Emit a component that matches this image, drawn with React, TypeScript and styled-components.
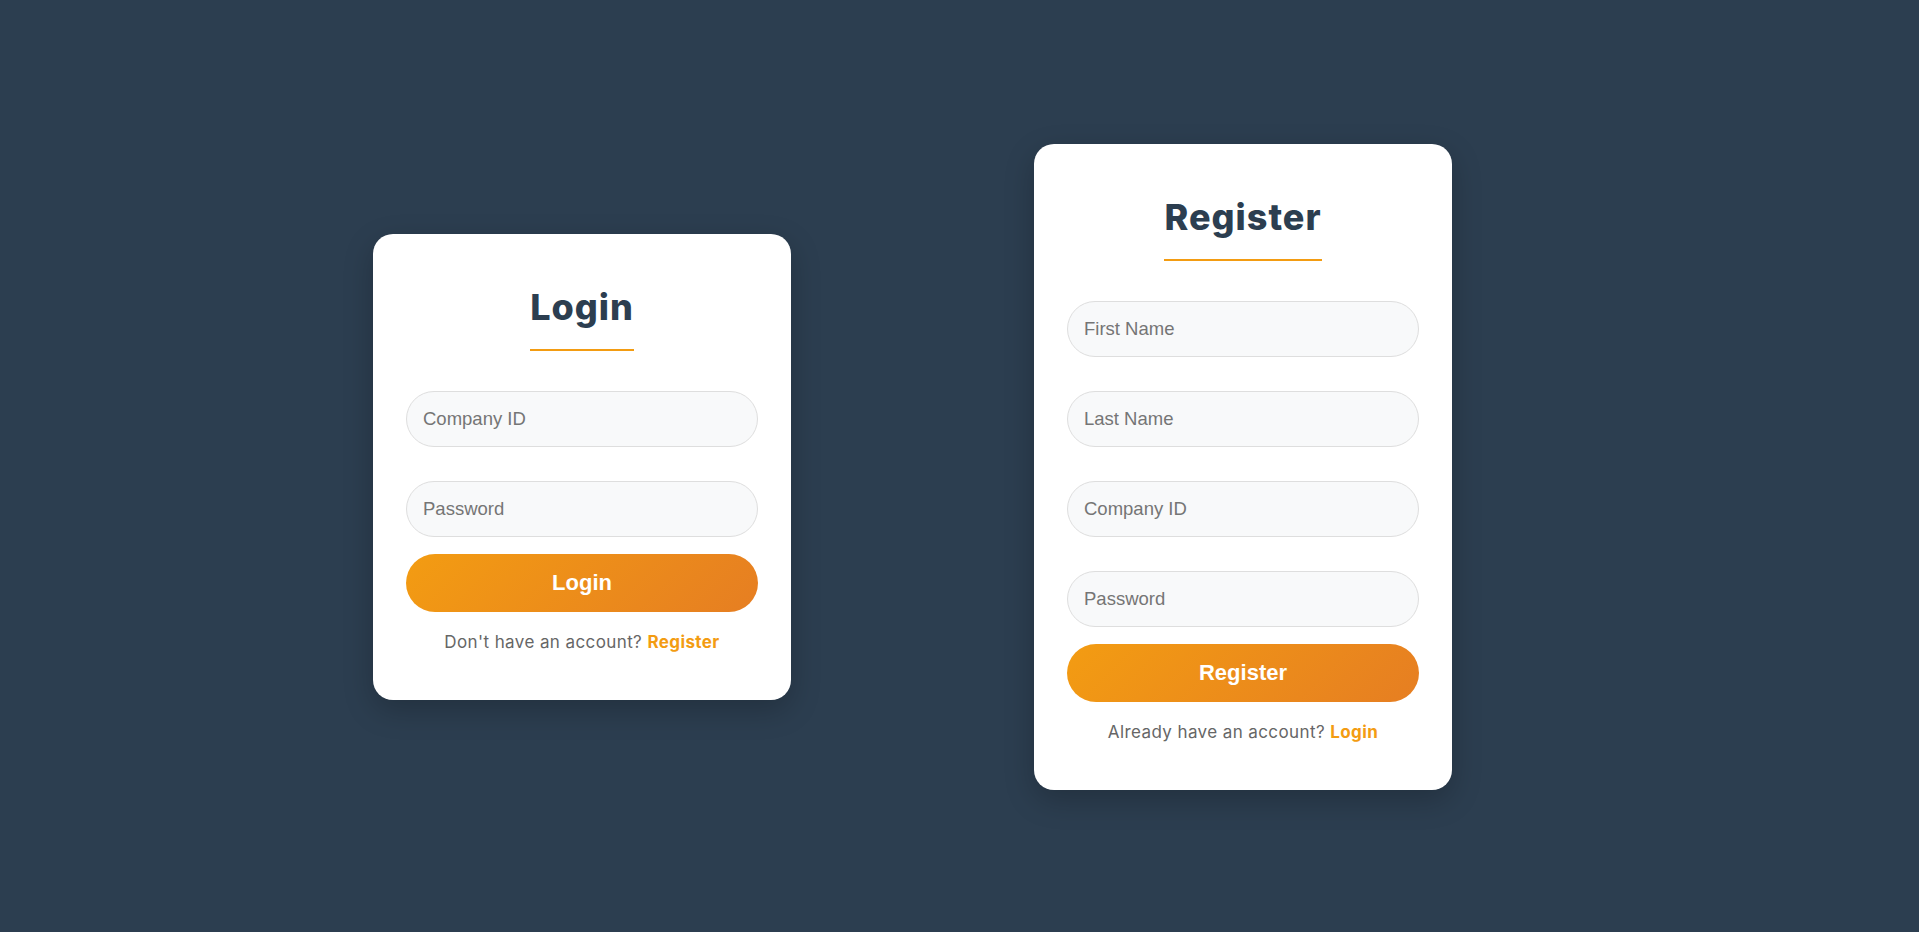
import React from 'react';
import styled, { createGlobalStyle } from 'styled-components';

const GlobalStyle = createGlobalStyle`
  * {
    box-sizing: border-box;
  }
  html, body {
    margin: 0;
    padding: 0;
  }
  body {
    background-color: #2c3e50;
    font-family: "Liberation Sans", Arial, sans-serif;
  }
`;

export const Page = styled.main`
  min-height: 100vh;
  display: flex;
  align-items: center;
  justify-content: center;
  gap: 243px;
  padding: 2px 94px 0 0;
`;

export const Card = styled.section`
  width: 418px;
  padding: 51px 33px 46px;
  background-color: #ffffff;
  border-radius: 20px;
  box-shadow: 0 10px 30px rgba(0, 0, 0, 0.22);
`;

export const TitleBlock = styled.div`
  text-align: center;
`;

export const Title = styled.h2`
  display: inline-block;
  margin: 0;
  padding-bottom: 20px;
  border-bottom: 2px solid #f39c12;
  font-family: "Inter", "Noto Sans", sans-serif;
  font-size: 36px;
  font-weight: 800;
  letter-spacing: 1px;
  line-height: 44px;
  color: #2c3e50;
`;

export const Form = styled.form`
  display: flex;
  flex-direction: column;
  margin-top: 40px;
`;

export const Input = styled.input<{ $last?: boolean }>`
  display: block;
  width: 100%;
  height: 56px;
  margin: 0 0 ${({ $last }) => ($last ? '17px' : '34px')};
  padding: 0 16px;
  background-color: #f8f9fa;
  border: 1px solid #dedede;
  border-radius: 28px;
  font-family: "Liberation Sans", Arial, sans-serif;
  font-size: 18.5px;
  color: #333;
  outline: none;

  &::placeholder {
    color: #757575;
  }
`;

export const SubmitButton = styled.button`
  width: 100%;
  height: 58px;
  border: none;
  border-radius: 29px;
  background: linear-gradient(135deg, #f39c12 0%, #e67e22 100%);
  color: #ffffff;
  font-family: "Liberation Sans", Arial, sans-serif;
  font-size: 22px;
  font-weight: 700;
  cursor: pointer;
`;

export const Switch = styled.p`
  margin: 18px 0 0;
  text-align: center;
  font-family: "Inter", "Noto Sans", sans-serif;
  font-size: 17px;
  letter-spacing: 0.4px;
  line-height: 24px;
  color: #666666;

  a {
    color: #f39c12;
    font-weight: 700;
    text-decoration: none;
    cursor: pointer;
  }
`;

type Field = { name: string; placeholder: string; type?: string };

const AuthCard = ({
  title,
  fields,
  prompt,
  linkText,
}: {
  title: string;
  fields: Field[];
  prompt: string;
  linkText: string;
}) => (
  <Card>
    <TitleBlock>
      <Title>{title}</Title>
    </TitleBlock>
    <Form onSubmit={(e) => e.preventDefault()}>
      {fields.map((f, i) => (
        <Input
          key={f.name}
          name={f.name}
          type={f.type || 'text'}
          placeholder={f.placeholder}
          $last={i === fields.length - 1}
        />
      ))}
      <SubmitButton type="submit">{title}</SubmitButton>
    </Form>
    <Switch>
      {prompt} <a>{linkText}</a>
    </Switch>
  </Card>
);

export default function App() {
  return (
    <>
      <GlobalStyle />
      <Page>
        <AuthCard
          title="Login"
          fields={[
            { name: 'companyId', placeholder: 'Company ID' },
            { name: 'password', placeholder: 'Password', type: 'password' },
          ]}
          prompt="Don't have an account?"
          linkText="Register"
        />
        <AuthCard
          title="Register"
          fields={[
            { name: 'firstName', placeholder: 'First Name' },
            { name: 'lastName', placeholder: 'Last Name' },
            { name: 'companyId', placeholder: 'Company ID' },
            { name: 'password', placeholder: 'Password', type: 'password' },
          ]}
          prompt="Already have an account?"
          linkText="Login"
        />
      </Page>
    </>
  );
}
